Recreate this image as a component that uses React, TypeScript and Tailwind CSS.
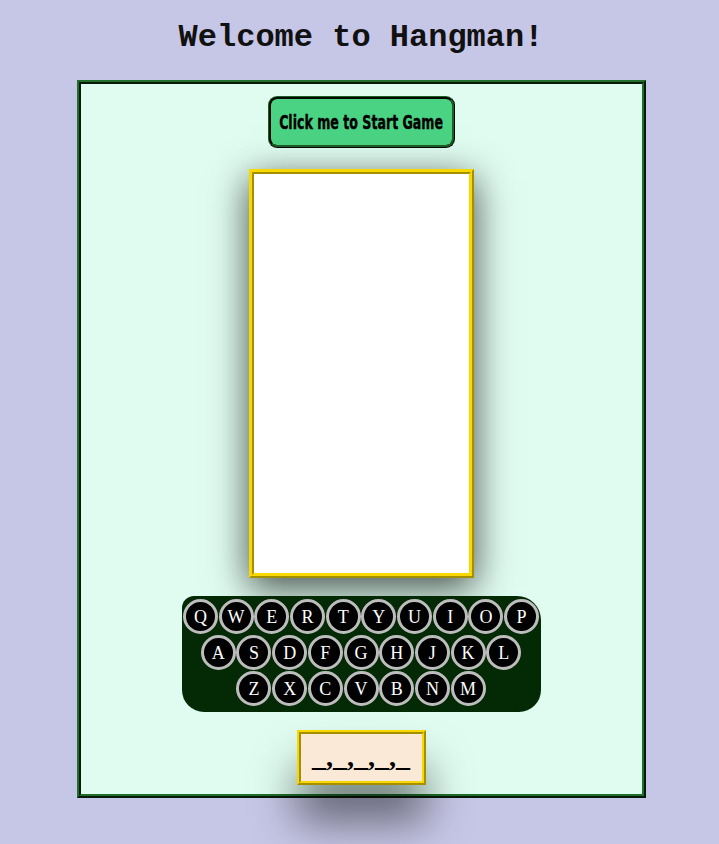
import React from 'react'

const ROWS = ['QWERTYUIOP', 'ASDFGHJKL', 'ZXCVBNM']

function Key({ letter }: { letter: string }) {
  return (
    <button
      type="button"
      className="w-[35px] h-[35px] rounded-full bg-black border-[3px] border-[#bdbdbd] text-white text-[18px] leading-none flex items-center justify-center font-['Liberation_Serif',serif]"
    >
      {letter}
    </button>
  )
}

export default function App() {
  return (
    <div className="min-h-[844px] bg-[#c6c6e6] pl-[3px] flex flex-col items-center">
      <h1 className="pt-[20px] mb-[24px] h-[56px] leading-[36px] text-[32px] font-bold text-[#111] font-['Liberation_Mono','Courier_New',monospace]">
        Welcome to Hangman!
      </h1>

      {/* Game panel */}
      <div className="w-[569px] h-[718px] bg-[#e0fcf0] border-[4px] [border-style:ridge] border-[#1f6e2a] flex flex-col items-center pt-[12px]">
        <button
          type="button"
          className="w-[187px] h-[52px] rounded-[9px] bg-[#4bd384] border-[3px] [border-style:ridge] border-[#1d5e24] flex items-center justify-center overflow-hidden"
        >
          <span className="inline-block whitespace-nowrap scale-x-[0.7] text-[20px] font-bold text-black [-webkit-text-stroke:0.4px_black] font-['DejaVu_Sans_Condensed','DejaVu_Sans',sans-serif]">
            Click me to Start Game
          </span>
        </button>

        {/* Drawing board */}
        <div className="mt-[21px] w-[225px] h-[409px] bg-white border-[5px] [border-style:ridge] border-[#f8d800] shadow-[0_10px_36px_rgba(0,0,0,0.7)]" />

        {/* Keyboard */}
        <div className="mt-[18px] w-[359px] h-[116px] bg-[#042a05] rounded-tl-[12px] rounded-tr-[24px] rounded-b-[22px] pt-[3px] flex flex-col items-center gap-px">
          {ROWS.map((row) => (
            <div key={row} className="flex gap-[0.7px]">
              {row.split('').map((l) => (
                <Key key={l} letter={l} />
              ))}
            </div>
          ))}
        </div>

        {/* Word display */}
        <div className="mt-[18px] w-[129px] h-[55px] bg-[#fbe9d7] border-[4px] [border-style:ridge] border-[#f8d800] flex items-center justify-center pb-[2px] text-[28px] leading-none font-bold text-black font-['Liberation_Serif',serif] shadow-[0_36px_44px_rgba(0,0,0,0.5)]">
          _,_,_,_,_
        </div>
      </div>
    </div>
  )
}
